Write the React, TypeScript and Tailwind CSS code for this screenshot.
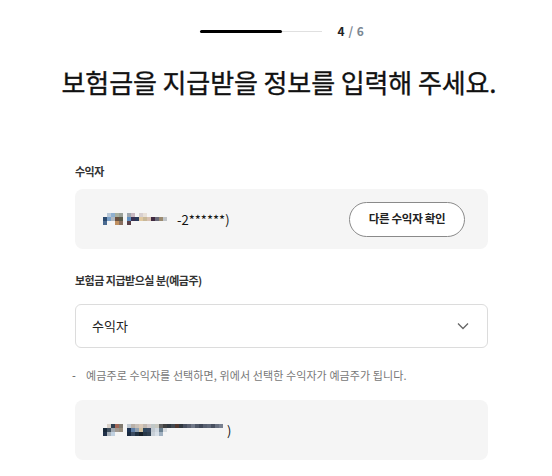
import React from "react";

const F = { fontFamily: '"Noto Sans CJK KR", "Noto Sans", sans-serif' };

type Row = string[];
function Mosaic({ rows, cell = 4 }: { rows: Row[]; cell?: number }) {
  return (
    <span className="inline-flex flex-col align-middle">
      {rows.map((r, i) => (
        <span key={i} className="flex">
          {r.map((c, j) => (
            <span key={j} style={{ width: cell, height: cell, background: c === "." ? "transparent" : c }} />
          ))}
        </span>
      ))}
    </span>
  );
}

const m1: Row[] = [
  [".", "#b8c8d8", "#8fb0d0", "#a8b0a0", "#9aa098", ".", "#a0a8b0", "#c8b8c0", ".", "#d8d0d0", "#e8e0d8", ".", ".", ".", ".", ".", ".", "."],
  ["#2c4a6e", "#7aa0c8", "#b0b8c0", "#6a5040", "#5a5a48", ".", "#6090c0", "#3a3050", "#2a3a5a", "#e0c8a0", "#c8b898", "#d8c0b0", "#402a40", "#6a6a78", "#9a8a70", "#c0c4c8", ".", "."],
  ["#4a6a90", ".", ".", "#c09060", "#8a7060", ".", "#5a4048", ".", ".", ".", ".", ".", ".", ".", ".", ".", ".", "."],
];

const m3: Row[] = [
  [".", "#d8d0c8", "#304050", "#a06858", "#807a70", ".", "#c0c8d0", "#b8b0a8", "#c8c0b8", "#d8c8b8", "#c0b8b0", "#d0c8c8", "#c0c8c8", "#c8c8c0", "#606060", "#404040", "#303840", "#404850", "#503830", "#303840", "#485060", "#5a6070", "#707888", "#505868", "#404858", "#586070", "#606878", "#485060", "#687080", "#788090", "."],
  ["#182838", "#405060", "#a0a8b0", "#a09890", "#9a9080", ".", "#1a3050", "#6080a8", "#90a0b0", "#d0c0a0", "#304860", "#384860", "#c0c8d0", "#d0d8e0", "#6a8090", "#d8dce0", ".", ".", ".", ".", ".", ".", ".", ".", ".", ".", ".", ".", ".", ".", "."],
  ["#203048", "#a8b0b8", "#c0d0e0", ".", ".", ".", "#1a2a40", "#3a4a60", "#203040", "#182028", "#283848", "#304050", "#c8d0d8", "#d8e0e8", "#a0b0c0", ".", ".", ".", ".", ".", ".", ".", ".", ".", ".", ".", ".", ".", ".", ".", "."],
];

export default function App() {
  return (
    <div className="w-[552px] h-[476px] bg-white overflow-hidden text-[#111]" style={F}>
      <div className="flex items-center justify-center pt-[22px] h-[40px] pl-[12px]">
        <div className="relative w-[122px] h-[3px] flex items-center">
          <div className="w-full h-px bg-[#e0e0e0]" />
          <div className="absolute left-0 top-0 h-[3px] w-[82px] bg-black rounded-full" />
        </div>
        <div className="ml-[16px] text-[12px] font-bold leading-none tracking-[0.5px]">
          <span className="text-[#222]">4</span>
          <span className="text-[#7b8794]"> / 6</span>
        </div>
      </div>

      <h1 className="mt-[24px] pl-[6px] text-center text-[26px] font-normal leading-[36px] tracking-[-0.1px] text-[#111] [-webkit-text-stroke:0.35px_#111]">
        보험금을 지급받을 정보를 입력해 주세요.
      </h1>

      <div className="mt-[64px] pl-[75px] pr-[64px]">
        <div className="text-[11px] font-bold text-[#333] leading-[14px] tracking-[-0.5px]">수익자</div>
        <div className="mt-[11px] h-[60px] rounded-[8px] bg-[#f5f5f5] flex items-center justify-between pl-[28px] pr-[23px]">
          <div className="flex items-center text-[13px] text-[#111]">
            <Mosaic rows={m1} />
            <span className="ml-[2px] leading-none">-2******)</span>
          </div>
          <button className="h-[35px] w-[116px] rounded-full border border-[#8a8a8a] bg-white text-[11.5px] font-bold text-[#222] tracking-[-0.3px]">
            다른 수익자 확인
          </button>
        </div>

        <div className="mt-[24px] text-[11px] font-bold text-[#333] leading-[14px] tracking-[-0.5px]">
          보험금 지급받으실 분(예금주)
        </div>
        <div className="mt-[17px] h-[44px] rounded-[6px] border border-[#dcdcdc] flex items-center justify-between pl-[16px] pr-[18px]">
          <span className="text-[13px] text-[#222]">수익자</span>
          <svg width="12" height="8" viewBox="0 0 12 8" fill="none">
            <path d="M1 1.5 L6 6.5 L11 1.5" stroke="#666" strokeWidth="1.3" />
          </svg>
        </div>

        <div className="mt-[20px] flex items-center text-[11px] leading-[14px] tracking-[0.1px]">
          <span className="w-[14px] -ml-[3px] text-[#555]">-</span>
          <span className="text-[#777]">예금주로 수익자를 선택하면, 위에서 선택한 수익자가 예금주가 됩니다.</span>
        </div>

        <div className="mt-[18px] h-[60px] rounded-[8px] bg-[#f5f5f5] flex items-center pl-[28px]">
          <div className="flex items-center text-[13px] text-[#111]">
            <Mosaic rows={m3} />
            <span className="ml-[0px] leading-none">)</span>
          </div>
        </div>
      </div>
    </div>
  );
}
